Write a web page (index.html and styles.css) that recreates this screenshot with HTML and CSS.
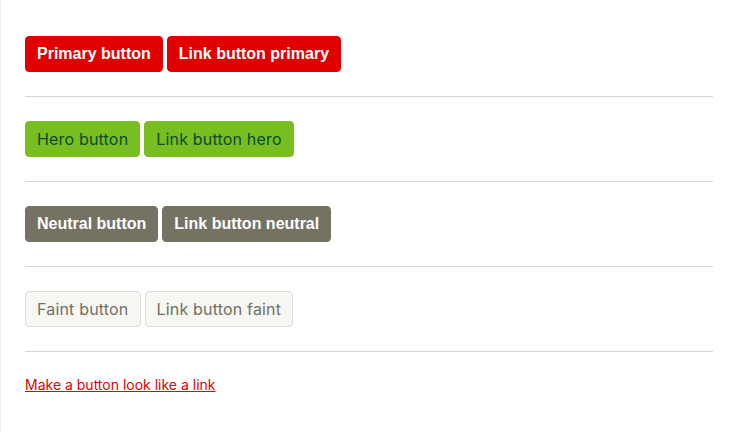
FILE: index.html
```html
<!DOCTYPE html>
<html>
<head>
<meta charset="utf-8">
<link rel="stylesheet" href="styles.css">
</head>
<body>
<div class="page">
  <div class="row">
    <button class="btn btn-primary">Primary button</button>
    <a class="btn btn-primary" href="#">Link button primary</a>
  </div>
  <hr class="sep">
  <div class="row">
    <button class="btn btn-hero">Hero button</button>
    <a class="btn btn-hero" href="#">Link button hero</a>
  </div>
  <hr class="sep">
  <div class="row">
    <button class="btn btn-neutral">Neutral button</button>
    <a class="btn btn-neutral" href="#">Link button neutral</a>
  </div>
  <hr class="sep">
  <div class="row">
    <button class="btn btn-faint">Faint button</button>
    <a class="btn btn-faint" href="#">Link button faint</a>
  </div>
  <hr class="sep">
  <div class="row">
    <button class="btn-link">Make a button look like a link</button>
  </div>
</div>
</body>
</html>
```

FILE: styles.css
```css
html, body {
  margin: 0;
  padding: 0;
  background: #fff;
}
.page {
  border-left: 1px solid #ececec;
  min-height: 432px;
  box-sizing: border-box;
  padding: 36px 24px 0 24px;
}
.row {
  display: flex;
  gap: 4px;
  align-items: center;
}
.sep {
  border: 0;
  border-top: 1px solid #d6d6d6;
  margin: 24px 0;
  height: 0;
}
.btn {
  display: inline-flex;
  align-items: center;
  box-sizing: border-box;
  height: 36px;
  padding: 0 11px;
  border: 1px solid transparent;
  border-radius: 4px;
  font-family: "Liberation Sans", Arial, sans-serif;
  font-size: 16px;
  line-height: 1;
  text-decoration: none;
  cursor: pointer;
  margin: 0;
}
.btn-primary {
  background: #e10000;
  border-color: #e10000;
  color: #fff;
  font-weight: bold;
}
.btn-hero {
  background: #78be20;
  border-color: #78be20;
  color: #0b4b2c;
  font-family: Inter, "Liberation Sans", sans-serif;
  font-weight: 400;
  letter-spacing: 0.18px;
}
.btn-neutral {
  background: #757263;
  border-color: #757263;
  color: #fff;
  font-weight: bold;
}
.btn-faint {
  background: #f6f6f3;
  border-color: #dcdcd8;
  color: #736f62;
  font-family: Inter, "Liberation Sans", sans-serif;
  font-weight: 400;
  letter-spacing: 0.18px;
}
.btn-link {
  background: none;
  border: 0;
  padding: 0;
  margin: 0;
  color: #e10000;
  text-decoration: underline;
  font-family: Inter, "Liberation Sans", sans-serif;
  font-size: 14px;
  cursor: pointer;
}
```
